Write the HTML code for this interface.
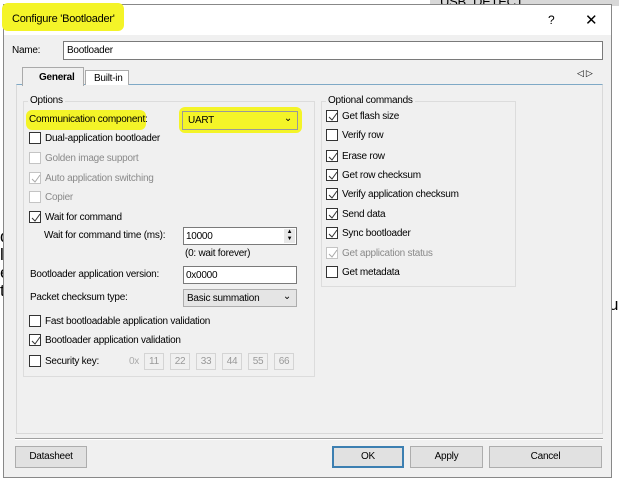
<!DOCTYPE html><html><head><style>
*{margin:0;padding:0;box-sizing:border-box}
body{width:619px;height:487px;background:#fff;position:relative;overflow:hidden;font-family:"Liberation Sans",sans-serif;font-size:10px;letter-spacing:-0.25px;color:#000}
.a{position:absolute;white-space:nowrap}
.cb{position:absolute;width:12px;height:12px;border:1px solid #333;background:#fff}
.cb.d{border-color:#c4c4c4}
.cb svg{position:absolute;left:1px;top:1px}
.in{position:absolute;background:#fff;border:1px solid #7a7a7a}
.btn{position:absolute;background:#e1e1e1;border:1px solid #adadad;text-align:center;line-height:20px}
.g{color:#8a8a8a}
.kb{position:absolute;width:20px;height:17px;border:1px solid #d4d4d4;color:#999;text-align:center;line-height:15px;top:353px}
</style></head><body>
<div class="a" style="left:0;top:0;width:619px;height:6px;background:#fff"></div>
<div class="a" style="left:430px;top:0;width:189px;height:6px;background:#d8d8d8"></div>
<div class="a" style="left:440px;top:-6px;font-size:13px">USB_DETECT</div>
<div class="a" style="left:0;top:228px;font-size:17px;line-height:18px">d<br>l<br>e<br>t</div>
<div class="a" style="left:609px;top:295px;font-size:17px">u</div>
<div class="a" style="left:3px;top:4px;width:609px;height:474px;background:#f0f0f0;border:1px solid #888"></div>
<div class="a" style="left:4px;top:5px;width:607px;height:30px;background:#fff"></div>
<div class="a" style="left:2px;top:3px;width:122px;height:28px;background:#f4f428;border-radius:6px"></div>
<div class="a" style="left:12px;top:13px;font-size:11px">Configure 'Bootloader'</div>
<div class="a" style="left:548px;top:13px;font-size:12px">?</div>
<div class="a" style="left:585px;top:11px;font-size:15px">✕</div>
<div class="a" style="left:12px;top:45px">Name:</div>
<div class="in" style="left:63px;top:41px;width:540px;height:19px"><span class="a" style="left:3px;top:3px">Bootloader</span></div>
<div class="a" style="left:16px;top:84px;width:587px;height:350px;background:#f0f0f0;border:1px solid #d9d9d9;border-top:1px solid #7fa9c6"></div>
<div class="a" style="left:22px;top:67px;width:62px;height:19px;background:#f0f0f0;border:1px solid #aaa;border-bottom:none;font-weight:bold;padding:4px 0 0 16px">General</div>
<div class="a" style="left:85px;top:70px;width:44px;height:15px;background:#fff;border:1px solid #aaa;border-bottom:none;padding:2px 0 0 8px">Built-in</div>
<div class="a" style="left:577px;top:68px;font-size:9px">◁ ▷</div>
<div class="a" style="left:23px;top:101px;width:292px;height:276px;border:1px solid #dcdcdc"></div>
<div class="a" style="left:28px;top:95px;background:#f0f0f0;padding:0 2px">Options</div>
<div class="a" style="left:26px;top:110px;width:120px;height:20px;background:#f4f428;border-radius:6px"></div>
<div class="a" style="left:29px;top:114px">Communication component:</div>
<div class="a" style="left:179px;top:107px;width:123px;height:26px;background:#f4f428;border-radius:6px"></div>
<div class="a" style="left:182px;top:111px;width:116px;height:19px;border:1px solid #999;padding:3px 5px">UART<span style="position:absolute;right:5px;top:1px">⌄</span></div>
<div class="cb" style="left:29px;top:132px"></div><div class="a" style="left:45px;top:133px">Dual-application bootloader</div>
<div class="cb d" style="left:29px;top:152px"></div><div class="a g" style="left:45px;top:153px">Golden image support</div>
<div class="cb d" style="left:29px;top:172px"><svg width="10" height="10"><path d="M1 5l3 3 5-7" stroke="#aaa" fill="none"/></svg></div><div class="a g" style="left:45px;top:173px">Auto application switching</div>
<div class="cb d" style="left:29px;top:191px"></div><div class="a g" style="left:45px;top:192px">Copier</div>
<div class="cb" style="left:29px;top:211px"><svg width="10" height="10"><path d="M1 5l3 3 5-7" stroke="#333" fill="none"/></svg></div><div class="a" style="left:45px;top:212px">Wait for command</div>
<div class="a" style="left:44px;top:230px">Wait for command time (ms):</div>
<div class="in" style="left:183px;top:227px;width:114px;height:18px"><span class="a" style="left:2px;top:3px">10000</span><span class="a" style="right:1px;top:1px;width:11px;height:14px;background:#e8e8e8;font-size:6px;line-height:7px;text-align:center">▲<br>▼</span></div>
<div class="a" style="left:185px;top:248px">(0: wait forever)</div>
<div class="a" style="left:30px;top:269px">Bootloader application version:</div>
<div class="in" style="left:183px;top:266px;width:114px;height:18px"><span class="a" style="left:2px;top:3px">0x0000</span></div>
<div class="a" style="left:30px;top:292px">Packet checksum type:</div>
<div class="a" style="left:183px;top:289px;width:114px;height:18px;background:#e5e5e5;border:1px solid #adadad;padding:3px 3px">Basic summation<span style="position:absolute;right:5px;top:1px">⌄</span></div>
<div class="cb" style="left:29px;top:315px"></div><div class="a" style="left:45px;top:316px">Fast bootloadable application validation</div>
<div class="cb" style="left:29px;top:334px"><svg width="10" height="10"><path d="M1 5l3 3 5-7" stroke="#333" fill="none"/></svg></div><div class="a" style="left:45px;top:335px">Bootloader application validation</div>
<div class="cb" style="left:29px;top:355px"></div><div class="a" style="left:45px;top:356px">Security key:</div>
<div class="a" style="left:129px;top:356px;color:#aaa">0x</div>
<div class="kb" style="left:144px">11</div><div class="kb" style="left:170px">22</div><div class="kb" style="left:196px">33</div><div class="kb" style="left:222px">44</div><div class="kb" style="left:248px">55</div><div class="kb" style="left:274px">66</div>
<div class="a" style="left:321px;top:101px;width:195px;height:186px;border:1px solid #dcdcdc"></div>
<div class="a" style="left:326px;top:95px;background:#f0f0f0;padding:0 2px">Optional commands</div>
<div class="cb" style="left:326px;top:110px"><svg width="10" height="10"><path d="M1 5l3 3 5-7" stroke="#333" fill="none"/></svg></div><div class="a" style="left:342px;top:111px">Get flash size</div>
<div class="cb" style="left:326px;top:129px"></div><div class="a" style="left:342px;top:130px">Verify row</div>
<div class="cb" style="left:326px;top:150px"><svg width="10" height="10"><path d="M1 5l3 3 5-7" stroke="#333" fill="none"/></svg></div><div class="a" style="left:342px;top:151px">Erase row</div>
<div class="cb" style="left:326px;top:169px"><svg width="10" height="10"><path d="M1 5l3 3 5-7" stroke="#333" fill="none"/></svg></div><div class="a" style="left:342px;top:170px">Get row checksum</div>
<div class="cb" style="left:326px;top:188px"><svg width="10" height="10"><path d="M1 5l3 3 5-7" stroke="#333" fill="none"/></svg></div><div class="a" style="left:342px;top:189px">Verify application checksum</div>
<div class="cb" style="left:326px;top:208px"><svg width="10" height="10"><path d="M1 5l3 3 5-7" stroke="#333" fill="none"/></svg></div><div class="a" style="left:342px;top:209px">Send data</div>
<div class="cb" style="left:326px;top:227px"><svg width="10" height="10"><path d="M1 5l3 3 5-7" stroke="#333" fill="none"/></svg></div><div class="a" style="left:342px;top:228px">Sync bootloader</div>
<div class="cb d" style="left:326px;top:247px"><svg width="10" height="10"><path d="M1 5l3 3 5-7" stroke="#aaa" fill="none"/></svg></div><div class="a g" style="left:342px;top:248px">Get application status</div>
<div class="cb" style="left:326px;top:266px"></div><div class="a" style="left:342px;top:267px">Get metadata</div>
<div class="a" style="left:15px;top:438px;width:588px;height:2px;border-top:1px solid #a0a0a0;border-bottom:1px solid #fff"></div>
<div class="btn" style="left:15px;top:446px;width:72px;height:22px">Datasheet</div>
<div class="btn" style="left:332px;top:446px;width:72px;height:22px;border:2px solid #3c7fb1;line-height:18px">OK</div>
<div class="btn" style="left:410px;top:446px;width:73px;height:22px">Apply</div>
<div class="btn" style="left:489px;top:446px;width:113px;height:22px">Cancel</div>
</body></html>
